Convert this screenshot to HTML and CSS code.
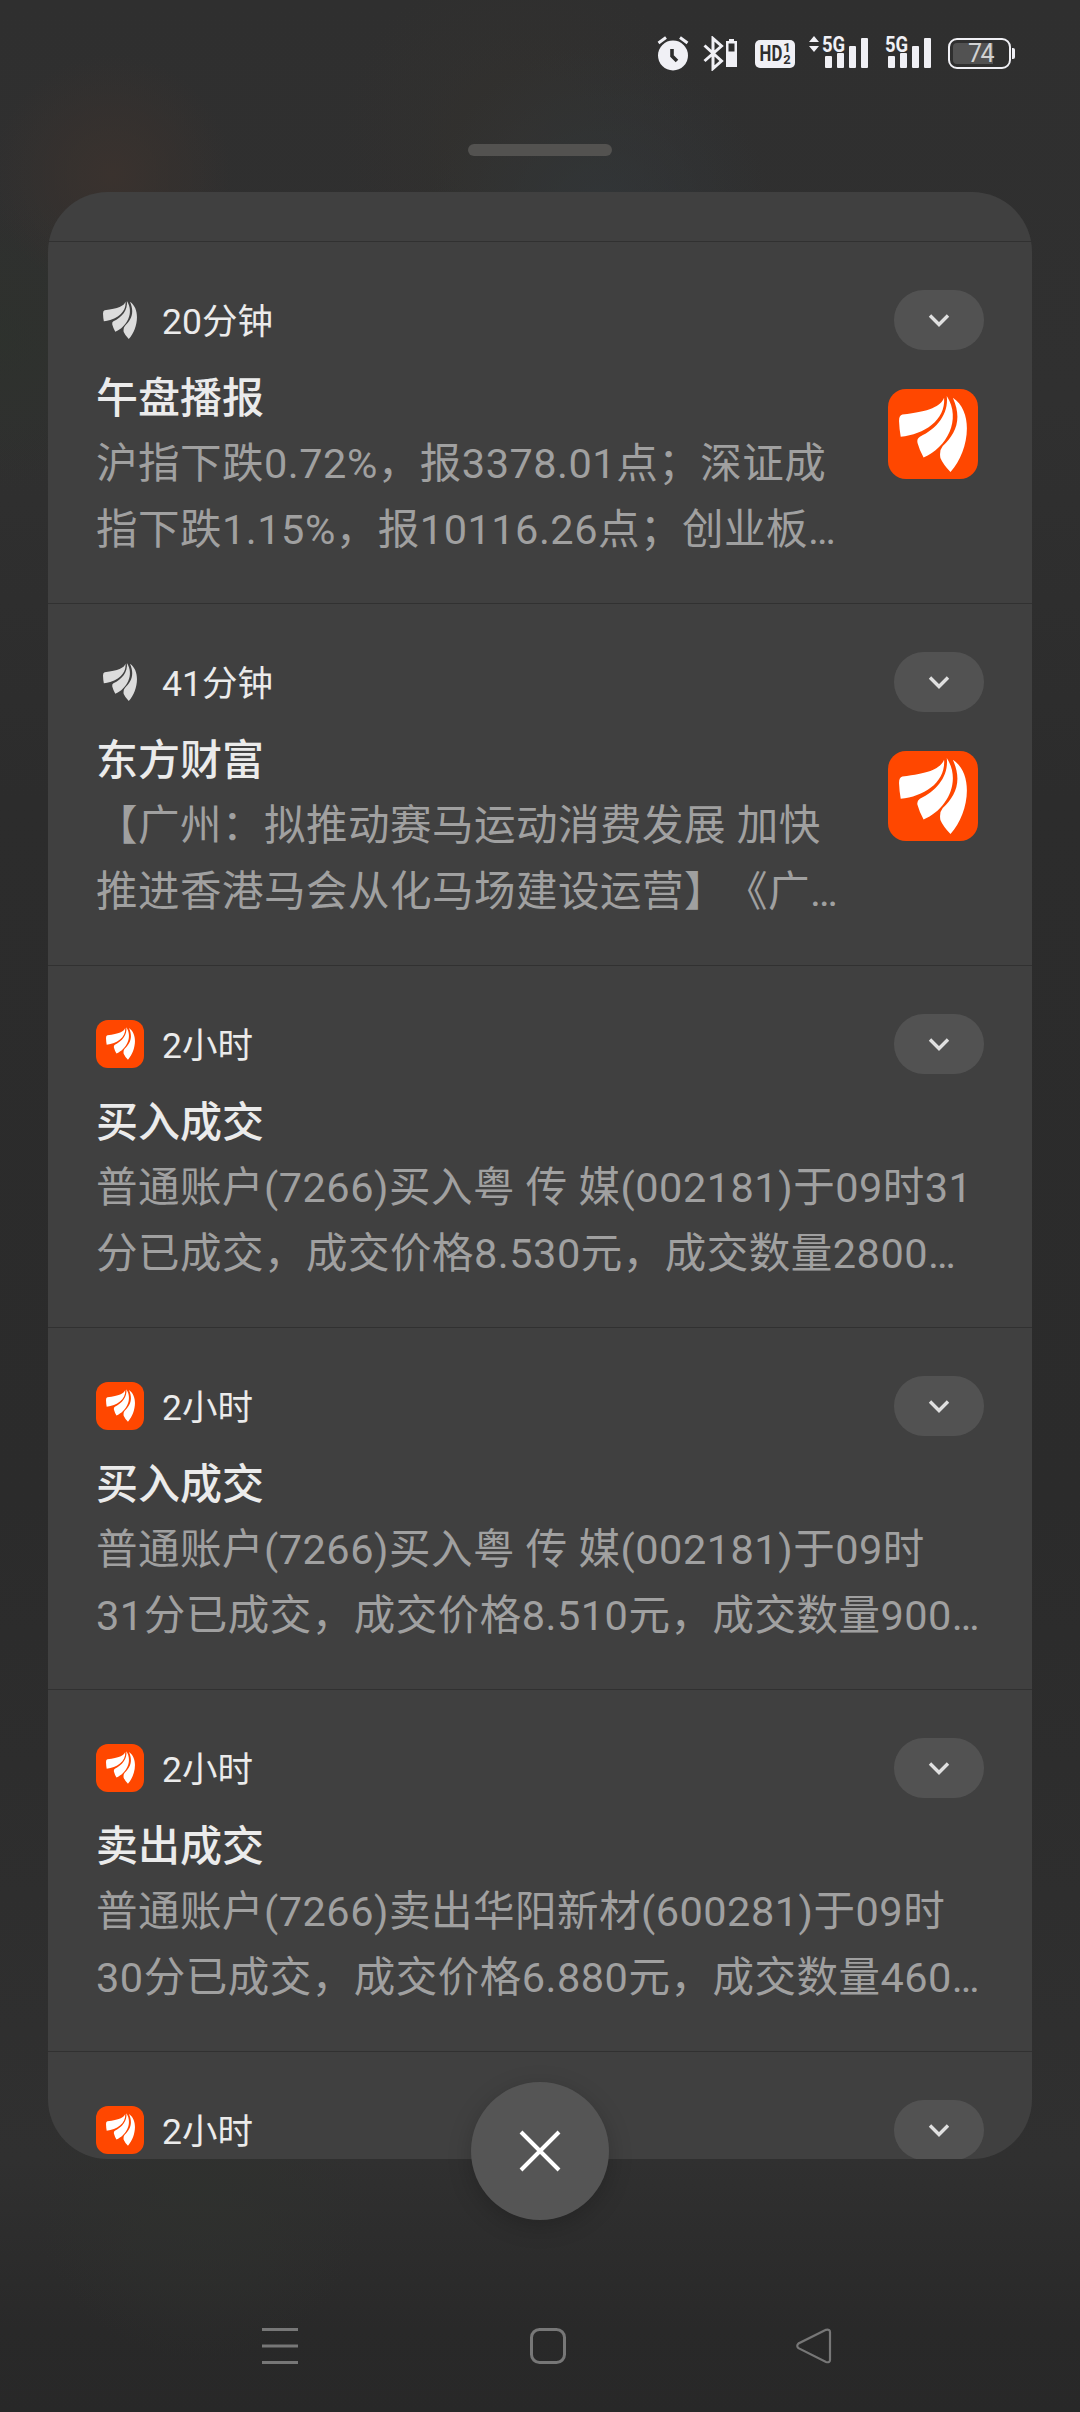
FILE: index.html
```
<!DOCTYPE html>
<html lang="zh-CN">
<head>
<meta charset="UTF-8">
<title>通知</title>
<link rel="stylesheet" href="styles.css">
</head>
<body>
<svg class="defs" width="0" height="0">
  <defs>
    <symbol id="wing" viewBox="0 0 202 226">
      <path d="M134 5C124 30 92 46 10 55Q0 57 0 74Q1 100 5 121C75 114 139 72 134 5Z"/>
      <path d="M142 0C148 55 112 97 62 121Q52 127 55 140Q61 162 73 183C142 154 187 70 142 0Z"/>
      <path d="M160 5C189 70 168 112 130 149Q119 162 123 184Q131 203 153 226C205 170 227 50 160 5Z"/>
    </symbol>
    <symbol id="chevron" viewBox="0 0 24 24">
      <path d="M3 7.5L12 16.5L21 7.5" fill="none" stroke="#e0e0e0" stroke-width="3.4"/>
    </symbol>
    <symbol id="bars" viewBox="0 0 44 31">
      <rect x="0" y="18" width="7" height="12" rx="1"/>
      <rect x="12" y="15" width="7" height="15" rx="1"/>
      <rect x="24" y="8" width="7" height="22" rx="1"/>
      <rect x="36" y="0" width="7" height="30" rx="1"/>
    </symbol>
  </defs>
</svg>

<div class="screen">
  <div class="status">
    <svg class="alarm" width="32" height="35" viewBox="0 0 32 35">
      <circle cx="16" cy="19.5" r="15"/>
      <path d="M1.5 7L9 1.5M23 1.5L30.500 7" class="line"/>
      <path d="M15 13V20L20 25" class="hand"/>
    </svg>
    <svg class="bluetooth" width="36" height="35" viewBox="0 0 36 35">
      <path d="M1.500 9.500L18.500 25L10 32.500V2.500L18.500 10L1.500 25" class="line"/>
      <path d="M26 3H31V5H34V31H23V5H26Z"/>
      <path d="M25.500 7.500H31.500V15.500H25.500Z" class="hole"/>
    </svg>
    <div class="hd"><span class="hd-text">HD</span><span class="hd-sims"><span>1</span><span>2</span></span></div>
    <div class="signal signal-data">
      <svg class="arrows" width="12" height="16" viewBox="0 0 12 16"><path d="M6 0L11 6H1ZM6 16L11 10H1Z"/></svg>
      <span class="net">5G</span>
      <svg class="bars" width="44" height="31"><use href="#bars"/></svg>
    </div>
    <div class="signal">
      <span class="net">5G</span>
      <svg class="bars" width="44" height="31"><use href="#bars"/></svg>
    </div>
    <div class="battery"><div class="level">74</div></div>
  </div>

  <div class="handle"></div>

  <div class="panel">
    <div class="stub"></div>

    <div class="item">
      <div class="head">
        <span class="app app-plain"><svg><use href="#wing"/></svg></span>
        <span class="time">20分钟</span>
        <span class="expand"><svg width="24" height="24"><use href="#chevron"/></svg></span>
      </div>
      <div class="content">
        <div class="message">
          <div class="title">午盘播报</div>
          <div class="text">沪指下跌0.72%，报3378.01点；深证成<br>指下跌1.15%，报10116.26点；创业板…</div>
        </div>
        <span class="thumb"><svg><use href="#wing"/></svg></span>
      </div>
    </div>

    <div class="item">
      <div class="head">
        <span class="app app-plain"><svg><use href="#wing"/></svg></span>
        <span class="time">41分钟</span>
        <span class="expand"><svg width="24" height="24"><use href="#chevron"/></svg></span>
      </div>
      <div class="content">
        <div class="message">
          <div class="title">东方财富</div>
          <div class="text">【广州：拟推动赛马运动消费发展 加快<br>推进香港马会从化马场建设运营】《广…</div>
        </div>
        <span class="thumb"><svg><use href="#wing"/></svg></span>
      </div>
    </div>

    <div class="item">
      <div class="head">
        <span class="app"><svg><use href="#wing"/></svg></span>
        <span class="time">2小时</span>
        <span class="expand"><svg width="24" height="24"><use href="#chevron"/></svg></span>
      </div>
      <div class="content">
        <div class="message">
          <div class="title">买入成交</div>
          <div class="text">普通账户(7266)买入粤 传 媒(002181)于09时31<br>分已成交，成交价格8.530元，成交数量2800…</div>
        </div>
      </div>
    </div>

    <div class="item">
      <div class="head">
        <span class="app"><svg><use href="#wing"/></svg></span>
        <span class="time">2小时</span>
        <span class="expand"><svg width="24" height="24"><use href="#chevron"/></svg></span>
      </div>
      <div class="content">
        <div class="message">
          <div class="title">买入成交</div>
          <div class="text">普通账户(7266)买入粤 传 媒(002181)于09时<br>31分已成交，成交价格8.510元，成交数量900…</div>
        </div>
      </div>
    </div>

    <div class="item">
      <div class="head">
        <span class="app"><svg><use href="#wing"/></svg></span>
        <span class="time">2小时</span>
        <span class="expand"><svg width="24" height="24"><use href="#chevron"/></svg></span>
      </div>
      <div class="content">
        <div class="message">
          <div class="title">卖出成交</div>
          <div class="text">普通账户(7266)卖出华阳新材(600281)于09时<br>30分已成交，成交价格6.880元，成交数量460…</div>
        </div>
      </div>
    </div>

    <div class="item">
      <div class="head">
        <span class="app"><svg><use href="#wing"/></svg></span>
        <span class="time">2小时</span>
        <span class="expand"><svg width="24" height="24"><use href="#chevron"/></svg></span>
      </div>
    </div>
  </div>

  <div class="close">
    <svg width="42" height="42" viewBox="0 0 42 42"><path d="M2 2L40 40M40 2L2 40"/></svg>
  </div>

  <div class="nav">
    <svg width="36" height="36" viewBox="0 0 36 36"><path d="M0 1.500H36M0 18H36M0 34.500H36"/></svg>
    <svg class="home" width="36" height="36" viewBox="0 0 36 36"><rect x="1.500" y="1.500" width="33" height="33" rx="8"/></svg>
    <svg width="36" height="36" viewBox="0 0 36 36"><path d="M30 1.800L2.500 15.500Q0 18 2.500 20.200L30 34Q34 35 34 32V4Q34 1 30 1.800Z" class="thin"/></svg>
  </div>
</div>
</body>
</html>
```

FILE: styles.css
```
body {
  margin: 0;
  background: #2e2e2e;
  font-family: Roboto, "Noto Sans CJK SC", sans-serif;
  color: #ebebeb;
}
svg {
  display: block;
}
.defs {
  position: absolute;
}
.screen {
  box-sizing: border-box;
  position: relative;
  width: 1080px;
  height: 2412px;
  overflow: hidden;
  background:
    radial-gradient(circle 120px at 112px 175px, #3a322e, rgba(58,50,46,0)),
    radial-gradient(circle 170px at 600px 215px, rgba(50,55,58,.8), rgba(50,55,58,0)),
    radial-gradient(circle 180px at 520px 140px, rgba(51,49,46,.8), rgba(51,49,46,0)),
    radial-gradient(circle 150px at 0 340px, rgba(45,50,44,.7), rgba(45,50,44,0)),
    radial-gradient(circle 170px at 200px 2190px, rgba(47,49,46,.8), rgba(47,49,46,0)),
    linear-gradient(#2f2f2f 0, #303030 400px, #2c2c2c 800px, #2b2b2b 1500px, #303030 2160px, #292929 2330px, #282828);
}

/* status bar */
.status {
  display: flex;
  align-items: flex-start;
  height: 108px;
  padding: 36px 0 0 657px;
  fill: #f0f0f5;
}
.status .line {
  fill: none;
  stroke: #f0f0f5;
  stroke-width: 3;
}
.status .hand {
  fill: none;
  stroke: #2e2e2e;
  stroke-width: 3.6;
}
.status .hole {
  fill: #2e2e2e;
}
.bluetooth {
  margin-left: 14px;
}
.hd {
  display: flex;
  align-items: center;
  justify-content: center;
  width: 40px;
  height: 28px;
  margin: 4px 0 0 16px;
  border-radius: 5px;
  background: #f0f0f5;
  color: #2e2e2e;
  font-weight: 700;
}
.hd-text {
  font-size: 22px;
  line-height: 28px;
  transform: scaleX(.76);
  margin: 0 -3px;
}
.hd-sims {
  display: flex;
  flex-direction: column;
  font-size: 13px;
  line-height: 12px;
}
.signal {
  display: grid;
  width: 47px;
  margin-left: 16px;
}
.signal > * {
  grid-area: 1 / 1;
}
.signal-data {
  width: 61px;
  margin-left: 13px;
}
.signal-data .net {
  margin-left: 14px;
}
.net {
  color: #f0f0f5;
  font-size: 22.500px;
  font-weight: 700;
  line-height: 16px;
  transform: scaleX(.82);
  transform-origin: left;
}
.bars {
  justify-self: end;
  margin-top: 2px;
}
.battery {
  box-sizing: border-box;
  position: relative;
  width: 63px;
  height: 31px;
  margin: 2px 0 0 16px;
  padding: 3px;
  border: 2px solid #f0f0f5;
  border-radius: 9px;
}
.battery:after {
  content: "";
  position: absolute;
  left: 62px;
  top: 8px;
  width: 3px;
  height: 11px;
  border-radius: 0 2px 2px 0;
  background: #f0f0f5;
}
.level {
  width: 40px;
  height: 21px;
  border-radius: 4px 0 0 4px;
  background: #525252;
  color: #d2d2d2;
  font-size: 25px;
  line-height: 22px;
  letter-spacing: -1.500px;
  text-align: right;
}

.handle {
  width: 144px;
  height: 12px;
  margin: 0 auto 36px;
  border-radius: 6px;
  background: #535250;
}

/* notification list */
.panel {
  width: 984px;
  height: 1967px;
  margin: 0 auto;
  border-radius: 60px;
  overflow: hidden;
  background: #404040;
}
.stub {
  height: 49px;
}
.item {
  box-sizing: border-box;
  height: 362px;
  padding: 48px 48px 0;
  border-top: 1px solid #313131;
}
.head {
  display: flex;
  align-items: center;
  height: 60px;
}
.app {
  display: flex;
  box-sizing: border-box;
  width: 48px;
  height: 48px;
  padding: 7px 9px 8px 10px;
  border-radius: 12px;
  background: #ff4700;
  fill: #fff;
}
.app svg, .thumb svg {
  width: 100%;
  height: 100%;
}
.app-plain {
  padding: 4px 7px 4px 7px;
  background: none;
  fill: #dcdcdc;
}
.time {
  flex: 1;
  margin-left: 18px;
  padding-top: 3px;
  font-size: 35.500px;
  line-height: 60px;
}
.expand {
  display: flex;
  align-items: center;
  justify-content: center;
  width: 90px;
  height: 60px;
  border-radius: 30px;
  background: #525252;
}
.content {
  display: flex;
  justify-content: space-between;
  padding-top: 16px;
}
.title {
  padding-top: 3px;
  font-size: 42px;
  font-weight: 500;
  line-height: 60px;
}
.text {
  margin-top: 2px;
  font-size: 41.500px;
  letter-spacing: .5px;
  line-height: 66px;
  color: #a0a0a0;
  white-space: nowrap;
  text-spacing-trim: space-all;
}
.thumb {
  box-sizing: border-box;
  width: 90px;
  height: 90px;
  margin: 23px 6px 0 0;
  padding: 7px 11px;
  border-radius: 18px;
  background: #ff4700;
  fill: #fff;
}

/* close button sits over the bottom edge of the list */
.close {
  position: absolute;
  left: 471px;
  top: 2082px;
  display: flex;
  align-items: center;
  justify-content: center;
  width: 138px;
  height: 138px;
  border-radius: 50%;
  background: #555;
  box-shadow: 0 6px 24px rgba(0,0,0,.2);
}
.close path {
  stroke: #fff;
  stroke-width: 4;
}

.nav {
  display: flex;
  justify-content: space-between;
  margin: 169px 248px 0 262px;
  fill: none;
  stroke: #777;
  stroke-width: 3;
}
.nav .home {
  margin-left: 2px;
}
.nav .thin {
  stroke-width: 2.200;
}
```
